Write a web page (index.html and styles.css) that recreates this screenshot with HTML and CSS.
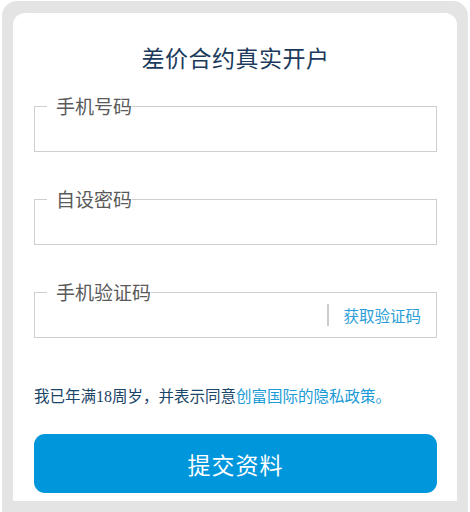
FILE: index.html
```html
<!DOCTYPE html>
<html lang="zh-CN">
<head>
<meta charset="utf-8">
<link rel="stylesheet" href="styles.css">
</head>
<body>
<div class="frame">
  <div class="card">
    <h1 class="title">差价合约真实开户</h1>
    <div class="field">
      <span class="label">手机号码</span>
    </div>
    <div class="field">
      <span class="label">自设密码</span>
    </div>
    <div class="field field-code">
      <span class="label">手机验证码</span>
      <span class="sep"></span>
      <span class="getcode">获取验证码</span>
    </div>
    <p class="agree">我已年满<span class="num">18</span>周岁，并表示同意<span class="link">创富国际的隐私政策。</span></p>
    <button class="submit">提交资料</button>
  </div>
</div>
</body>
</html>
```
FILE: styles.css
```css
html, body {
  margin: 0;
  padding: 0;
  background: #ffffff;
  height: 512px;
  overflow: hidden;
}
body {
  font-family: "Noto Sans CJK SC", "Noto Sans", sans-serif;
}
.frame {
  margin: 1px 2px 0 2px;
  background: #e4e4e4;
  border-radius: 15px 15px 0 0;
  padding: 12px 11px 12px 11px;
}
.card {
  background: #ffffff;
  border-radius: 12px 12px 0 0;
  padding: 29px 20px 8px 21px;
}
.title {
  margin: 0;
  font-weight: normal;
  font-size: 23px;
  line-height: 30px;
  text-align: center;
  color: #1b3a5c;
  letter-spacing: 0.5px;
}
.field {
  position: relative;
  height: 44px;
  border: 1px solid #cfcfcf;
  margin-top: 47px;
  display: flex;
  align-items: center;
  justify-content: flex-end;
  padding-right: 15px;
}
.title + .field {
  margin-top: 34px;
}
.label {
  position: absolute;
  left: 12px;
  top: -14px;
  background: #ffffff;
  padding-left: 9px;
  font-size: 19px;
  line-height: 26px;
  color: #5a5a5a;
}
.sep {
  width: 2px;
  height: 22px;
  background: #cccccc;
  margin-right: 14px;
}
.getcode {
  font-size: 15.5px;
  color: #2a9ed6;
  line-height: 22px;
}
.agree {
  margin: 46px 0 0 0;
  font-family: "Noto Sans CJK SC", sans-serif;
  font-size: 15.5px;
  line-height: 22px;
  color: #1a4468;
}
.agree .num {
  font-family: "Liberation Serif", serif;
  font-size: 16px;
}
.agree .link {
  color: #1a9ad6;
}
.submit {
  display: block;
  width: 100%;
  margin-top: 26px;
  height: 59px;
  border: none;
  border-radius: 11px;
  background: #0096db;
  color: #ffffff;
  font-family: "Noto Sans CJK SC", sans-serif;
  font-size: 23px;
  letter-spacing: 1px;
  cursor: pointer;
}
```
